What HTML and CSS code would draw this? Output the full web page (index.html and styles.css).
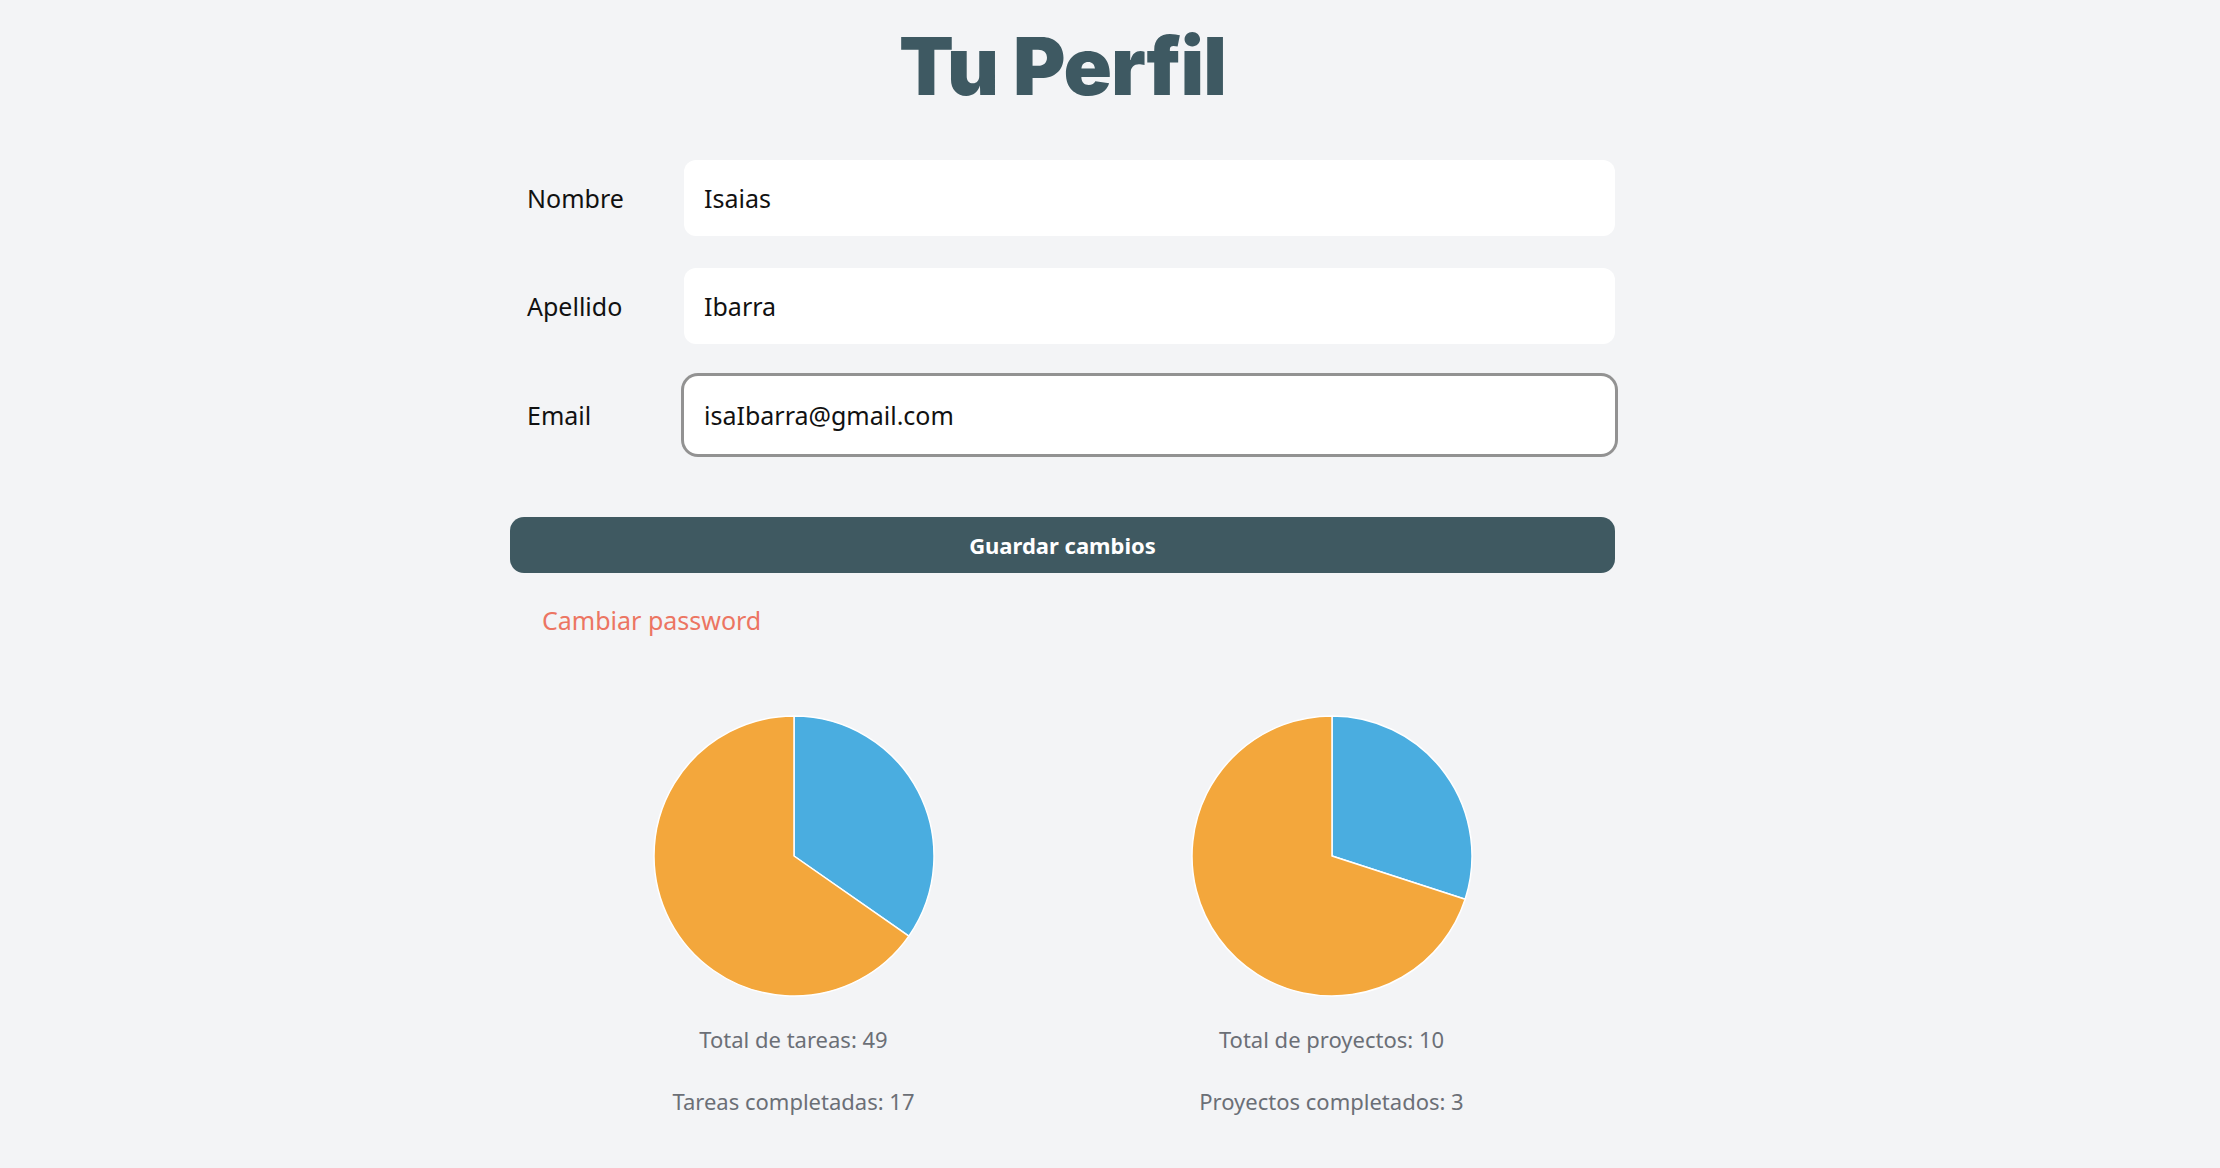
FILE: index.html
```html
<!DOCTYPE html>
<html lang="es">
<head>
<meta charset="utf-8">
<title>Tu Perfil</title>
<link rel="stylesheet" href="styles.css">
</head>
<body>
<main class="page">
  <h1 class="title">Tu Perfil</h1>
  <form class="profile-form">
    <div class="field">
      <label class="field-label" for="nombre">Nombre</label>
      <input class="field-input" id="nombre" type="text" value="Isaias">
    </div>
    <div class="field">
      <label class="field-label" for="apellido">Apellido</label>
      <input class="field-input" id="apellido" type="text" value="Ibarra">
    </div>
    <div class="field">
      <label class="field-label" for="email">Email</label>
      <input class="field-input field-input--focus" id="email" type="email" value="isaIbarra@gmail.com">
    </div>
    <button class="save-btn" type="button">Guardar cambios</button>
  </form>
  <a class="change-pass" href="#">Cambiar password</a>
  <section class="stats">
    <div class="stat">
      <svg class="pie" viewBox="0 0 282 282" width="282" height="282">
        <path class="slice slice--done" d="M141 141 L141 1 A140 140 0 0 1 255.83 221.09 Z"/>
        <path class="slice slice--rest" d="M141 141 L255.83 221.09 A140 140 0 1 1 141 1 Z"/>
      </svg>
      <p class="stat-text stat-text--first">Total de tareas: 49</p>
      <p class="stat-text">Tareas completadas: 17</p>
    </div>
    <div class="stat">
      <svg class="pie" viewBox="0 0 282 282" width="282" height="282">
        <path class="slice slice--done" d="M141 141 L141 1 A140 140 0 0 1 274.15 184.26 Z"/>
        <path class="slice slice--rest" d="M141 141 L274.15 184.26 A140 140 0 1 1 141 1 Z"/>
      </svg>
      <p class="stat-text stat-text--first">Total de proyectos: 10</p>
      <p class="stat-text">Proyectos completados: 3</p>
    </div>
  </section>
</main>
</body>
</html>
```

FILE: styles.css
```css
html, body {
  margin: 0;
  padding: 0;
  background: #f3f4f6;
}

body {
  font-family: "Noto Sans", "Open Sans", sans-serif;
  color: #111;
}

.page {
  width: 1105px;
  margin-left: 510px;
  display: flex;
  flex-direction: column;
}

.title {
  margin: 0;
  padding-top: 26px;
  font-family: Inter, "Noto Sans", sans-serif;
  font-weight: 900;
  font-size: 80px;
  line-height: 80px;
  letter-spacing: -1px;
  color: #3e5962;
  text-align: center;
}

.profile-form {
  margin-top: 54px;
  display: flex;
  flex-direction: column;
  gap: 32px;
}

.field {
  display: grid;
  grid-template-columns: 174px 1fr;
  align-items: center;
}

.field-label {
  padding-left: 17px;
  font-size: 25px;
  color: #111;
}

.field-input {
  height: 76px;
  box-sizing: border-box;
  border: none;
  border-radius: 12px;
  background: #fff;
  padding: 0 20px;
  font-family: "Noto Sans", "Open Sans", sans-serif;
  font-size: 25px;
  color: #111;
  outline: none;
}

.field-input--focus {
  height: 78px;
  box-shadow: 0 0 0 3px #929292;
  border-radius: 14px;
}

.save-btn {
  margin-top: 31px;
  height: 56px;
  border: none;
  border-radius: 14px;
  background: #3f5961;
  color: #fff;
  font-family: "Noto Sans", "Open Sans", sans-serif;
  font-weight: 700;
  font-size: 22px;
  cursor: pointer;
}

.change-pass {
  margin-top: 27px;
  margin-left: 32px;
  align-self: flex-start;
  font-size: 25px;
  line-height: 40px;
  color: #ec7562;
  text-decoration: none;
}

.stats {
  margin-top: 75px;
  display: flex;
  justify-content: center;
  gap: 256px;
}

.stat {
  width: 282px;
  display: flex;
  flex-direction: column;
  align-items: center;
}

.pie {
  display: block;
}

.slice {
  stroke: #fff;
  stroke-width: 1.5;
  stroke-linejoin: round;
}

.slice--done {
  fill: #4aade0;
}

.slice--rest {
  fill: #f3a73c;
}

.stat-text {
  margin: 22px 0 0;
  font-size: 22px;
  line-height: 40px;
  color: #6b6f76;
  white-space: nowrap;
}

.stat-text--first {
  margin-top: 22px;
}
```
